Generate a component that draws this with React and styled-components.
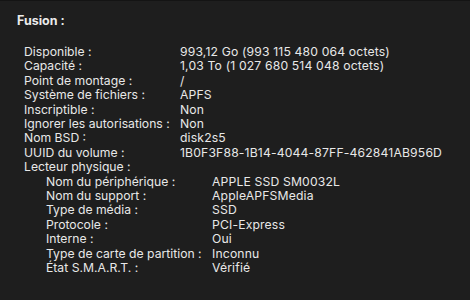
import React from "react";
import styled, { createGlobalStyle } from "styled-components";

const Global = createGlobalStyle`
  html, body { margin: 0; padding: 0; background: #1e1e1e; }
  body { font-family: Inter, "Noto Sans", sans-serif; }
`;

const Window = styled.div`
  width: 470px;
  height: 300px;
  box-sizing: border-box;
  background: #1e1e1e;
  border-top: 1px solid #141414;
  padding: 13px 0 0 17px;
  color: #e8e8e8;
  font-size: 12.2px;
  font-weight: 400;
  overflow: hidden;
`;

const Title = styled.div`
  font-weight: 700;
  font-size: 12.5px;
  line-height: 14px;
  color: #ebebeb;
  margin-bottom: 17px;
`;

const List = styled.div`
  display: grid;
  grid-template-columns: ${(p) => p.$label}px auto;
  margin-left: ${(p) => p.$indent}px;
  line-height: 14.4px;
`;

const Label = styled.div`
  white-space: nowrap;
`;

const Value = styled.div`
  white-space: nowrap;
  letter-spacing: 0.15px;
`;

const Full = styled.div`
  grid-column: 1 / -1;
`;

const main = [
  ["Disponible :", "993,12 Go (993 115 480 064 octets)"],
  ["Capacité :", "1,03 To (1 027 680 514 048 octets)"],
  ["Point de montage :", "/"],
  ["Système de fichiers :", "APFS"],
  ["Inscriptible :", "Non"],
  ["Ignorer les autorisations :", "Non"],
  ["Nom BSD :", "disk2s5"],
  ["UUID du volume :", "1B0F3F88-1B14-4044-87FF-462841AB956D"],
];

const drive = [
  ["Nom du périphérique :", "APPLE SSD SM0032L"],
  ["Nom du support :", "AppleAPFSMedia"],
  ["Type de média :", "SSD"],
  ["Protocole :", "PCI-Express"],
  ["Interne :", "Oui"],
  ["Type de carte de partition :", "Inconnu"],
  ["État S.M.A.R.T. :", "Vérifié"],
];

export default function App() {
  return (
    <>
      <Global />
      <Window>
        <Title>Fusion :</Title>
        <List $label={156} $indent={7}>
          {main.map(([l, v]) => (
            <React.Fragment key={l}>
              <Label>{l}</Label>
              <Value>{v}</Value>
            </React.Fragment>
          ))}
          <Full>Lecteur physique :</Full>
          <Full>
            <List $label={166} $indent={22}>
              {drive.map(([l, v]) => (
                <React.Fragment key={l}>
                  <Label>{l}</Label>
                  <Value>{v}</Value>
                </React.Fragment>
              ))}
            </List>
          </Full>
        </List>
      </Window>
    </>
  );
}
